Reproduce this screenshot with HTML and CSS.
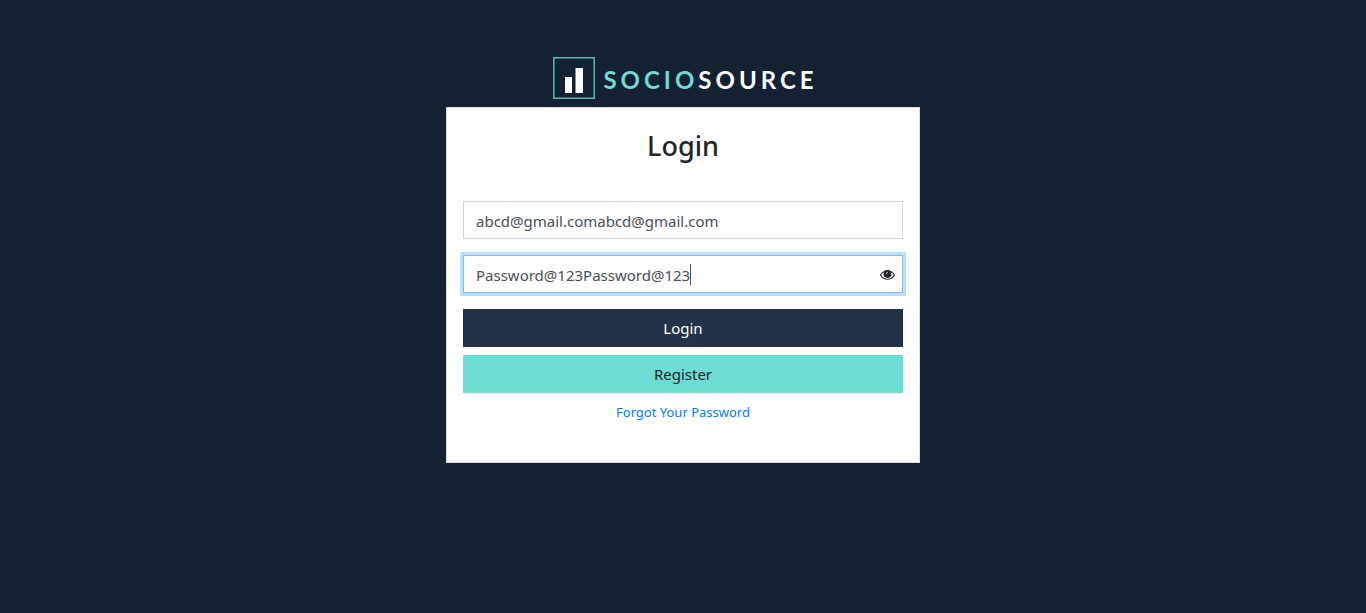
FILE: index.html
```html
<!DOCTYPE html>
<html lang="en">
<head>
  <meta charset="utf-8">
  <meta name="viewport" content="width=device-width, initial-scale=1">
  <title>Login</title>
  <link rel="stylesheet" href="styles.css">
</head>
<body>
  <main class="page">
    <div class="brand">
      <svg class="brand-mark" viewBox="0 0 42 42" aria-hidden="true">
        <rect x="0.75" y="0.75" width="40.5" height="40.5" fill="none" stroke="#57b8b3" stroke-width="1.5"/>
        <path d="M12 20h7v16h-7zM22.500 11h7.500v25h-7.500z" fill="#fff"/>
      </svg>
      <span class="brand-name"><span class="brand-accent">SOCIO</span>SOURCE</span>
    </div>
    <section class="card">
      <h1 class="title">Login</h1>
      <form class="form">
        <input class="field" type="text" aria-label="Email" value="abcd@gmail.comabcd@gmail.com">
        <div class="password">
          <input class="field field-password" type="text" aria-label="Password" value="Password@123Password@123" autofocus>
          <span class="caret" aria-hidden="true"></span>
          <button class="reveal" type="button" aria-label="Hide password">
            <svg class="eye" viewBox="0 0 1792 1792" fill="currentColor" aria-hidden="true">
              <path d="M1664 960q-152-236-381-353 61 104 61 225 0 185-131.500 316.500t-316.500 131.500-316.500-131.500-131.500-316.500q0-121 61-225-229 117-381 353 133 205 333.500 326.500t434.500 121.500 434.500-121.500 333.500-326.500zm-720-384q0-20-14-34t-34-14q-125 0-214.500 89.500t-89.500 214.500q0 20 14 34t34 14 34-14 14-34q0-86 61-147t147-61q20 0 34-14t14-34zm848 384q0 34-20 69-140 230-376.500 368.500t-499.500 138.500-499.500-139-376.500-368q-20-35-20-69t20-69q140-229 376.500-368t499.500-139 499.500 139 376.500 368q20 35 20 69z"/>
              <circle cx="896" cy="832" r="460"/>
              <path d="M740 790a160 160 0 0 1 160-160" fill="none" stroke="#fff" stroke-width="80" stroke-linecap="round"/>
            </svg>
          </button>
        </div>
        <div class="actions">
          <button class="button button-login" type="submit">Login</button>
          <button class="button button-register" type="button">Register</button>
        </div>
      </form>
      <a class="forgot" href="#">Forgot Your Password</a>
    </section>
  </main>
</body>
</html>
```
FILE: styles.css
```css
* {
  box-sizing: border-box;
}

body {
  margin: 0;
  min-height: 100vh;
  background: #132133;
  color: #212529;
  font-family: "Segoe UI", "Noto Sans", sans-serif;
  font-size: 15px;
  line-height: 24px;
}

.page {
  display: flex;
  flex-direction: column;
  align-items: center;
  gap: 8px;
  padding: 57px 16px 48px;
}

.brand {
  display: flex;
  align-items: center;
  gap: 8px;
  padding-left: 5px;
}

.brand-mark {
  width: 42px;
  height: 42px;
}

.brand-name {
  padding-top: 4px;
  color: #fff;
  font-family: Lato, sans-serif;
  font-size: 24px;
  font-weight: 700;
  letter-spacing: 4px;
}

.brand-accent {
  color: #6cdcd4;
}

.card {
  display: flex;
  flex-direction: column;
  width: 100%;
  max-width: 474px;
  padding: 21px 16px 38px;
  border: 1px solid #dfdfdf;
  background: #fff;
}

.title {
  margin: 0 0 38px;
  font-size: 27px;
  font-weight: 500;
  line-height: 34px;
  text-align: center;
}

.form {
  display: flex;
  flex-direction: column;
  gap: 16px;
}

.field {
  display: block;
  width: 100%;
  height: 38px;
  padding: 8px 12px 6px;
  border: 1px solid #ced4da;
  border-radius: 0;
  background: #fff;
  color: #495057;
  font: inherit;
}

.field:focus {
  outline: 0;
  border-color: #80bdff;
  box-shadow: 0 0 0 3px #bfdeff;
}

.password {
  position: relative;
}

.field-password {
  padding-right: 40px;
  caret-color: transparent;
}

.caret {
  position: absolute;
  top: 9px;
  left: 227px;
  width: 1px;
  height: 21px;
  background: #495057;
}

.reveal {
  position: absolute;
  top: 0;
  right: 8px;
  display: flex;
  align-items: center;
  height: 100%;
  padding: 0;
  border: 0;
  background: none;
  color: #212529;
}

.eye {
  width: 15px;
  height: 15px;
}

.actions {
  display: flex;
  flex-direction: column;
  gap: 8px;
}

.button {
  width: 100%;
  height: 38px;
  padding: 6px 12px;
  border: 0;
  font: inherit;
  cursor: pointer;
}

.button-login {
  background: #243249;
  color: #fff;
}

.button-register {
  background: #6cdcd4;
  color: #212529;
}

.forgot {
  align-self: center;
  margin-top: 7px;
  color: #007bff;
  font-size: 13px;
  text-decoration: none;
}
```
